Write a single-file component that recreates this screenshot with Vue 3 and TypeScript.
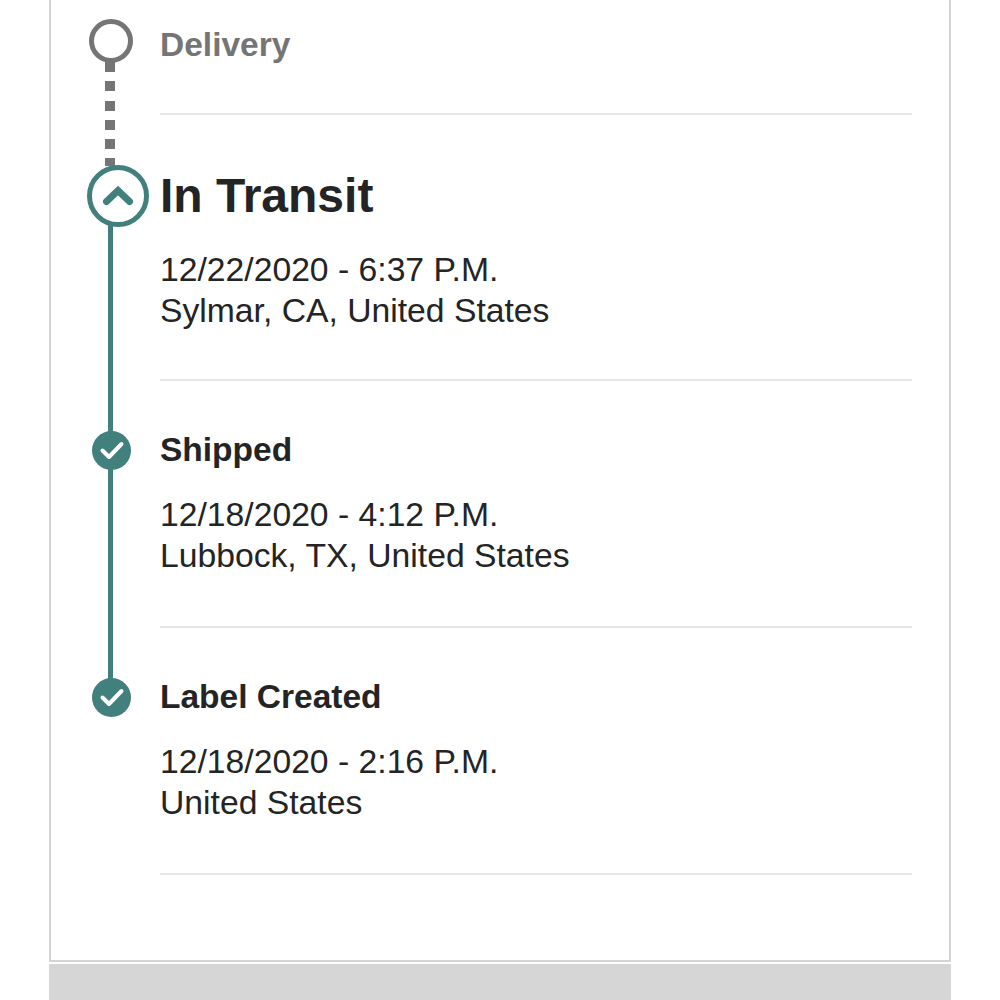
<template>
  <div class="page">
    <div class="card">
      <div v-for="step in steps" :key="step.title" class="step" :class="step.kind">
        <div class="rail">
          <span v-if="step.kind === 'pending'" class="line dotted"></span>
          <span v-else-if="step.kind === 'current'" class="line solid from-ring"></span>
          <span v-else-if="step.title === 'Shipped'" class="line solid to-next"></span>

          <span v-if="step.kind === 'pending'" class="ring"></span>
          <span v-else-if="step.kind === 'current'" class="ring-big">
            <svg width="32" height="22" viewBox="0 0 32 22">
              <path d="M4.5 16.5 L16 5.5 L27.5 16.5" fill="none" stroke="#41807d" stroke-width="7" stroke-linecap="round" stroke-linejoin="miter" />
            </svg>
          </span>
          <span v-else class="check">
            <svg width="26" height="21" viewBox="0 0 26 21">
              <path d="M3.5 10.5 L10 17 L22.5 4" fill="none" stroke="#fff" stroke-width="4" stroke-linecap="round" stroke-linejoin="round" />
            </svg>
          </span>
        </div>
        <div class="body">
          <h3>{{ step.title }}</h3>
          <p v-if="step.date">{{ step.date }}</p>
          <p v-if="step.place">{{ step.place }}</p>
        </div>
      </div>
    </div>
    <div class="footer">
      <span>Status as of 12/22/2020</span>
    </div>
  </div>
</template>

<script setup lang="ts">
interface Step {
  title: string;
  kind: 'pending' | 'current' | 'done';
  date?: string;
  place?: string;
}

const steps: Step[] = [
  { title: 'Delivery', kind: 'pending' },
  { title: 'In Transit', kind: 'current', date: '12/22/2020 - 6:37 P.M.', place: 'Sylmar, CA, United States' },
  { title: 'Shipped', kind: 'done', date: '12/18/2020 - 4:12 P.M.', place: 'Lubbock, TX, United States' },
  { title: 'Label Created', kind: 'done', date: '12/18/2020 - 2:16 P.M.', place: 'United States' }
];
</script>

<style>
html, body {
  background: #fff;
}
</style>

<style scoped>
.page {
  width: 1000px;
  height: 1000px;
  overflow: hidden;
  padding: 0 49px;
  box-sizing: border-box;
  font-family: "Liberation Sans", Arial, sans-serif;
  color: #242424;
}

.card {
  height: 962px;
  box-sizing: border-box;
  border: solid #d4d4d4;
  border-width: 0 2px 2px;
  padding-right: 37px;
}

.step {
  display: flex;
}

.rail {
  position: relative;
  width: 109px;
  flex: none;
}

.body {
  flex: 1;
  border-bottom: 2px solid #e6e6e6;
  box-sizing: border-box;
}

.pending .body {
  height: 115px;
  padding-top: 26px;
}

.current .body {
  height: 266px;
  padding-top: 48px;
}

.done .body {
  height: 247px;
  padding-top: 50px;
}

h3 {
  margin: 0 0 25px;
  font-size: 33.5px;
  line-height: 38px;
  font-weight: 700;
}

.current h3 {
  font-size: 48px;
  line-height: 66px;
  margin-bottom: 20px;
}

.pending h3 {
  color: #757575;
}

p {
  margin: 0;
  font-size: 33.7px;
  line-height: 41px;
  font-weight: 400;
}

.line {
  position: absolute;
  left: 57px;
  width: 5px;
  top: 0;
  bottom: 0;
}

.line.solid {
  background: #41807d;
}

.from-ring {
  top: 100px;
}

.to-next {
  bottom: -60px;
}

.dotted {
  left: 54px;
  width: 10px;
  top: 62px;
  bottom: -51px;
  background: repeating-linear-gradient(to bottom, #757575 0 10px, transparent 10px 19.3px);
}

.ring {
  position: absolute;
  left: 38px;
  top: 19px;
  width: 44px;
  height: 44px;
  box-sizing: border-box;
  border: 5px solid #757575;
  border-radius: 50%;
  background: #fff;
}

.ring-big {
  position: absolute;
  left: 36px;
  top: 50px;
  width: 62px;
  height: 62px;
  box-sizing: border-box;
  border: 5px solid #41807d;
  border-radius: 50%;
  background: #fff;
  display: flex;
  align-items: center;
  justify-content: center;
}

.check {
  position: absolute;
  left: 41px;
  top: 50px;
  width: 39px;
  height: 39px;
  border-radius: 50%;
  background: #41807d;
  display: flex;
  align-items: center;
  justify-content: center;
}

.footer {
  margin-top: 2px;
  height: 60px;
  background: #d6d6d6;
  padding: 30px 44px 0;
  font-size: 33px;
  line-height: 38px;
  color: #333;
}
</style>
